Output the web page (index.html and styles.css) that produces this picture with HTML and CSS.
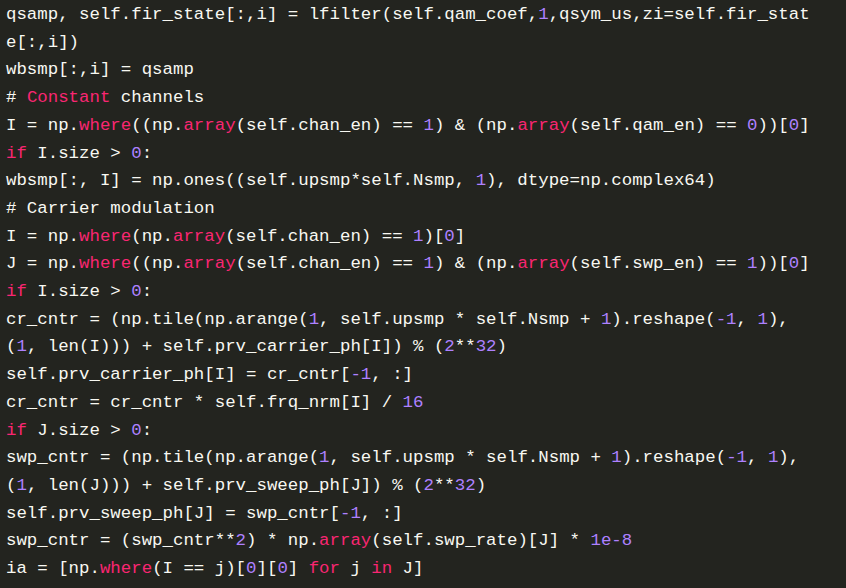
FILE: index.html
```html
<!DOCTYPE html>
<html>
<head>
<meta charset="utf-8">
<link rel="stylesheet" href="styles.css">
</head>
<body>
<pre class="code"><code>qsamp, self.fir_state[:,i] = lfilter(self.qam_coef,<span class="n">1</span>,qsym_us,zi=self.fir_stat
e[:,i])
wbsmp[:,i] = qsamp
# <span class="k">Constant</span> channels
I = np.<span class="k">where</span>((np.<span class="k">array</span>(self.chan_en) == <span class="n">1</span>) &amp; (np.<span class="k">array</span>(self.qam_en) == <span class="n">0</span>))[<span class="n">0</span>]
<span class="k">if</span> I.size &gt; <span class="n">0</span>:
wbsmp[:, I] = np.ones((self.upsmp*self.Nsmp, <span class="n">1</span>), dtype=np.complex64)
# Carrier modulation
I = np.<span class="k">where</span>(np.<span class="k">array</span>(self.chan_en) == <span class="n">1</span>)[<span class="n">0</span>]
J = np.<span class="k">where</span>((np.<span class="k">array</span>(self.chan_en) == <span class="n">1</span>) &amp; (np.<span class="k">array</span>(self.swp_en) == <span class="n">1</span>))[<span class="n">0</span>]
<span class="k">if</span> I.size &gt; <span class="n">0</span>:
cr_cntr = (np.tile(np.arange(<span class="n">1</span>, self.upsmp * self.Nsmp + <span class="n">1</span>).reshape(<span class="n">-1</span>, <span class="n">1</span>),
(<span class="n">1</span>, len(I))) + self.prv_carrier_ph[I]) % (<span class="n">2</span>**<span class="n">32</span>)
self.prv_carrier_ph[I] = cr_cntr[<span class="n">-1</span>, :]
cr_cntr = cr_cntr * self.frq_nrm[I] / <span class="n">16</span>
<span class="k">if</span> J.size &gt; <span class="n">0</span>:
swp_cntr = (np.tile(np.arange(<span class="n">1</span>, self.upsmp * self.Nsmp + <span class="n">1</span>).reshape(<span class="n">-1</span>, <span class="n">1</span>),
(<span class="n">1</span>, len(J))) + self.prv_sweep_ph[J]) % (<span class="n">2</span>**<span class="n">32</span>)
self.prv_sweep_ph[J] = swp_cntr[<span class="n">-1</span>, :]
swp_cntr = (swp_cntr**<span class="n">2</span>) * np.<span class="k">array</span>(self.swp_rate)[J] * <span class="n">1e-8</span>
ia = [np.<span class="k">where</span>(I == j)[<span class="n">0</span>][<span class="n">0</span>] <span class="k">for</span> j <span class="k">in</span> J]</code></pre>
</body>
</html>
```

FILE: styles.css
```css
html, body {
  margin: 0;
  padding: 0;
  background: #23241f;
}
body {
  width: 846px;
  height: 588px;
  overflow: hidden;
}
.code {
  margin: 0;
  padding: 1px 0 0 6px;
  background: #23241f;
  color: #f8f8f2;
  font-family: "Liberation Mono", "DejaVu Sans Mono", monospace;
  font-size: 17.4px;
  line-height: 27.7px;
  white-space: pre;
}
.code code {
  font-family: inherit;
  font-size: inherit;
}
.k {
  color: #f92672;
}
.n {
  color: #ae81ff;
}
```
